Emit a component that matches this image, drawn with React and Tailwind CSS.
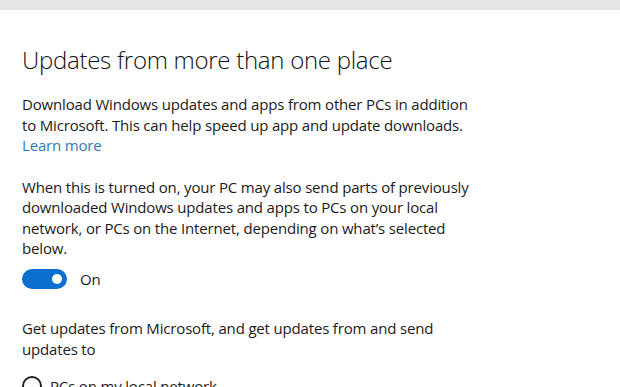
export default function App() {
  return (
    <div className="w-[620px] h-[387px] overflow-hidden bg-white text-[#1b1b1b]" style={{ fontFamily: '"Open Sans", "Noto Sans", sans-serif' }}>
      <div className="h-[10px] bg-[#e6e6e6]" />
      <div className="pl-[22px] pt-[34px]">
        <h1 className="text-[24px] leading-[32px] font-light tracking-[-0.28px] text-[#111]">Updates from more than one place</h1>
        <p className="mt-[18px] text-[15px] leading-[20.5px] tracking-[-0.17px]">
          Download Windows updates and apps from other PCs in addition<br />
          to Microsoft. This can help speed up app and update downloads.
        </p>
        <a className="block text-[15px] leading-[20.5px] tracking-[-0.17px] text-[#2f7bb5]">Learn more</a>
        <p className="mt-[21px] text-[15px] leading-[20.5px] tracking-[-0.17px]">
          When this is turned on, your PC may also send parts of previously<br />
          downloaded Windows updates and apps to PCs on your local<br />
          network, or PCs on the Internet, depending on what’s selected<br />
          below.
        </p>
        <div className="mt-[9px] flex items-center gap-[13px]">
          <div className="w-[45px] h-[20px] rounded-full bg-[#0b6fcf] flex items-center justify-end pr-[5px]">
            <div className="w-[10px] h-[10px] rounded-full bg-white" />
          </div>
          <span className="text-[15px] tracking-[-0.17px]">On</span>
        </div>
        <p className="mt-[28px] text-[15px] leading-[20.5px] tracking-[-0.17px]">
          Get updates from Microsoft, and get updates from and send<br />
          updates to
        </p>
        <div className="mt-[16px] flex items-center gap-[8px]">
          <div className="w-[20px] h-[20px] rounded-full border-2 border-[#222]" />
          <span className="text-[15px] tracking-[-0.17px]">PCs on my local network</span>
        </div>
      </div>
    </div>
  );
}
